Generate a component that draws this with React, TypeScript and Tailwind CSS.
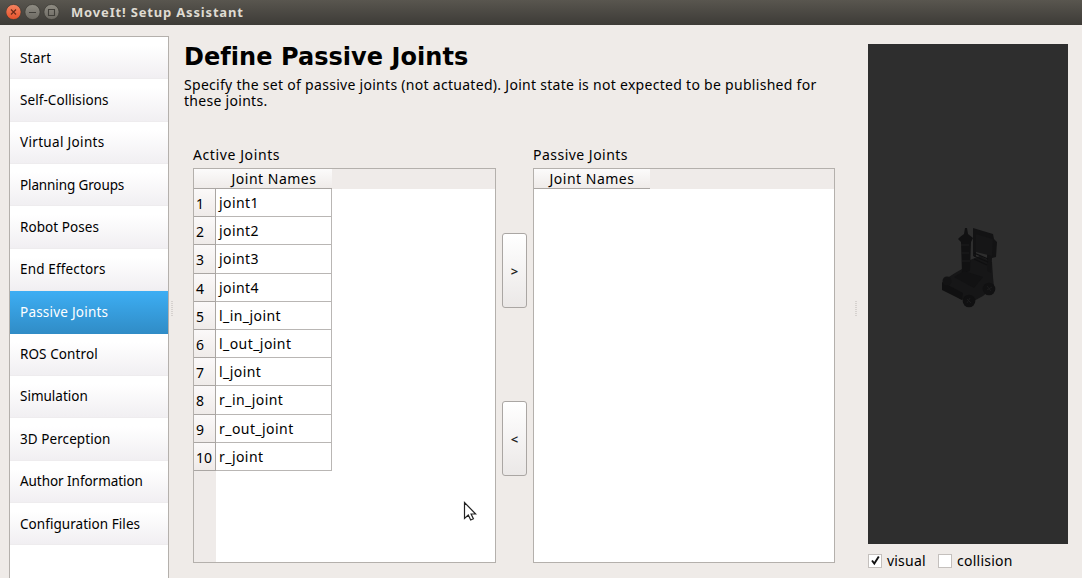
import React from "react";

const steps = [
  { label: "Start", tracking: "tracking-[0.2px]" },
  { label: "Self-Collisions", tracking: "tracking-[0.07px]" },
  { label: "Virtual Joints", tracking: "tracking-[0.33px]" },
  { label: "Planning Groups", tracking: "tracking-[-0.12px]" },
  { label: "Robot Poses", tracking: "tracking-[0.07px]" },
  { label: "End Effectors", tracking: "tracking-[0.16px]" },
  { label: "Passive Joints", tracking: "tracking-[0.22px]" },
  { label: "ROS Control", tracking: "tracking-[0.09px]" },
  { label: "Simulation", tracking: "tracking-[0px]" },
  { label: "3D Perception", tracking: "tracking-[0.07px]" },
  { label: "Author Information", tracking: "tracking-[-0.05px]" },
  { label: "Configuration Files", tracking: "tracking-[0.05px]" },
];

const joints = [
  "joint1", "joint2", "joint3", "joint4", "l_in_joint",
  "l_out_joint", "l_joint", "r_in_joint", "r_out_joint", "r_joint",
];

function TitleBar() {
  return (
    <header className="flex h-[25px] shrink-0 items-center bg-linear-to-b from-[#59564f] to-[#3d3b37] pl-[6px]">
      <svg width="56" height="18" viewBox="0 0 56 18" fill="none" className="-mt-px shrink-0">
        <defs>
          <linearGradient id="close" x1="0" y1="0" x2="0" y2="1">
            <stop offset="0" stopColor="#f58562" />
            <stop offset="1" stopColor="#e5512a" />
          </linearGradient>
          <linearGradient id="plain" x1="0" y1="0" x2="0" y2="1">
            <stop offset="0" stopColor="#908d84" />
            <stop offset="1" stopColor="#6c6962" />
          </linearGradient>
        </defs>
        <circle cx="7.5" cy="9" r="7.6" fill="url(#close)" stroke="#3b3934" strokeWidth=".7" />
        <circle cx="26.5" cy="9" r="7.6" fill="url(#plain)" stroke="#3b3934" strokeWidth=".7" />
        <circle cx="45.5" cy="9" r="7.6" fill="url(#plain)" stroke="#3b3934" strokeWidth=".7" />
        <path d="M5 6.5l5 5M10 6.5l-5 5" stroke="#6b2b19" strokeWidth="1.2" />
        <path d="M23 9.5h7M42.5 6.5h6v6h-6z" stroke="#413f3a" strokeWidth="1.1" />
      </svg>
      <h1 className="ml-[9px] text-[13px] font-bold tracking-[0.83px] whitespace-nowrap text-[#dfdbd2]">
        MoveIt! Setup Assistant
      </h1>
    </header>
  );
}

function Sidebar() {
  return (
    <nav className="mt-[11px] w-[160px] shrink-0 border border-b-0 border-[#b4b0ac] bg-white">
      {steps.map(({ label, tracking }) => (
        <div
          key={label}
          className={`flex h-[42.36px] items-center pl-[10px] text-[13.5px] whitespace-nowrap ${tracking} ${
            label === "Passive Joints"
              ? "bg-linear-to-b from-[#3daef4] to-[#308cc6] text-white"
              : "border-b border-[#eeecee] bg-linear-to-b from-white from-20% to-[#f1eff2] text-black"
          }`}
        >
          {label}
        </div>
      ))}
    </nav>
  );
}

function Grip({ className }: { className: string }) {
  return (
    <svg width="2" height="16" viewBox="0 0 2 16" className={className}>
      <path d="M1 0v16" stroke="#bdb8b5" strokeWidth="1" strokeDasharray="1 1" />
    </svg>
  );
}

function ActiveTable() {
  return (
    <div className="flex h-[395px] flex-col border border-[#b4b0ac] bg-white">
      <div className="flex h-[20px] shrink-0 bg-[#efebe9]">
        <div className="flex w-[138px] items-center justify-center border-b border-[#aaa6a3] bg-linear-to-b from-[#fcfbfb] to-[#efebe9] pl-[22px] text-[14px] tracking-[0.5px]">
          Joint Names
        </div>
      </div>
      <div className="flex flex-1">
        <div className="w-[22px] bg-[#efebe9]">
          {joints.map((joint, i) => (
            <div
              key={joint}
              className="flex h-[28.2px] items-center border-r border-b border-[#aaa6a3] bg-linear-to-b from-[#fbf9f9] to-[#efebe9] pt-[2px] pl-[2px] text-[14px]"
            >
              {i + 1}
            </div>
          ))}
        </div>
        <div className="w-[116px]">
          {joints.map((joint) => (
            <div key={joint} className="flex h-[28.2px] items-center border-r border-b border-[#b9b6b4] pl-[3px] text-[14px] tracking-[0.44px]">
              {joint}
            </div>
          ))}
        </div>
      </div>
    </div>
  );
}

function PassiveTable() {
  return (
    <div className="h-[395px] border border-[#b4b0ac] bg-white">
      <div className="flex h-[20px] bg-[#efebe9]">
        <div className="flex w-[116px] items-center justify-center border-b border-[#aaa6a3] bg-linear-to-b from-[#fcfbfb] to-[#efebe9] text-[14px] tracking-[0.5px]">
          Joint Names
        </div>
      </div>
    </div>
  );
}

function MoveButton({ children }: { children: React.ReactNode }) {
  return (
    <button className="h-[75px] w-[25px] rounded-[3px] border border-[#aaa6a3] bg-linear-to-b from-white to-[#ebe8e7] pt-[3px] text-[13px] font-semibold text-[#222]">
      {children}
    </button>
  );
}

function Robot() {
  return (
    <svg width="60" height="86" viewBox="0 0 60 86" className="block">
      <path d="M4 55L15 48L22 44L30 35L40 31L52 37L53 52L54 62L43 71L32 77L20 74L6 64z" fill="#161617" />
      <path d="M20 12L24 9L25 3L27 3L28 9L33 13L31 17L30 46L22 48L21 17L18 14z" fill="#111112" />
      <path d="M33 3L53 9L54 14L57 17L56 32L52 33L51 48L47 46L47 20L36 13L36 32L33 31z" fill="#131314" />
      <path d="M36 9L53 14L52 31L36 27z" fill="#161617" />
      <path d="M34 28L48 34M34 31L48 37M34 34L47 40" stroke="#0f0f10" strokeWidth="1.3" />
      <path d="M21 20h8M21 28h8M22 36h8" stroke="#1c1c1d" />
      <path d="M2 57L23 68L22 75L2 65z" fill="#101011" />
      <path d="M14 52L24 46L43 52L34 63z" fill="#121213" />
      <circle cx="29" cy="76" r="6.3" fill="#101011" />
      <circle cx="49" cy="64" r="6.3" fill="#111112" />
      <circle cx="7" cy="56" r="4.5" fill="#131314" />
      <path d="M27 74l4 4m-1-5l-3 5M47 61l4 5m1-4l-5 3" stroke="#1b1b1c" />
    </svg>
  );
}

function Preview() {
  return (
    <aside className="mt-[19px] ml-[11px] w-[200px] shrink-0">
      <div className="flex h-[500px] justify-center bg-[#2e2e2e] pt-[181px] pl-[4px]">
        <Robot />
      </div>
      <div className="mt-[6px] flex h-[21px] items-center text-[14px]">
        <span className="flex size-[14px] items-center justify-center border border-[#c4c0bd] bg-white">
          <svg width="11" height="11" viewBox="0 0 11 11" fill="none">
            <path d="M2 5.5l2.3 3L8.8 1.5" stroke="#111" strokeWidth="1.9" />
          </svg>
        </span>
        <span className="ml-[5px] w-[39px] tracking-[0.2px]">visual</span>
        <span className="ml-[12px] size-[14px] border border-[#c4c0bd] bg-white" />
        <span className="ml-[5px] tracking-[0.25px]">collision</span>
      </div>
    </aside>
  );
}

export default function App() {
  return (
    <div className="relative flex h-[578px] w-[1082px] flex-col overflow-hidden bg-[#efebe8] font-['Noto_Sans',sans-serif] text-black">
      <TitleBar />
      <div className="flex flex-1 pl-[9px]">
        <Sidebar />
        <Grip className="mt-[276px] ml-[2px] shrink-0" />
        <main className="ml-[11px] w-[651px] shrink-0">
          <h2 className="mt-[18px] h-[28px] font-['DejaVu_Sans',sans-serif] text-[24px] leading-[28px] font-bold tracking-[0.05px] whitespace-nowrap">
            Define Passive Joints
          </h2>
          <p className="mt-[6px] text-[14px] leading-[16px] tracking-[0.29px] whitespace-nowrap">
            Specify the set of passive joints (not actuated). Joint state is not expected to be published for
            <br />
            these joints.
          </p>
          <div className="mt-[36px] ml-[9px] flex">
            <section className="w-[303px]">
              <h3 className="h-[23px] text-[14px] leading-[20px] tracking-[0.6px]">Active Joints</h3>
              <ActiveTable />
            </section>
            <div className="mx-[6px] flex flex-col gap-[93px] pt-[88px]">
              <MoveButton>&gt;</MoveButton>
              <MoveButton>&lt;</MoveButton>
            </div>
            <section className="w-[302px]">
              <h3 className="h-[23px] text-[14px] leading-[20px] tracking-[0.48px]">Passive Joints</h3>
              <PassiveTable />
            </section>
          </div>
        </main>
        <Grip className="mt-[276px] ml-[20px] shrink-0" />
        <Preview />
      </div>
      <svg width="14" height="21" viewBox="0 0 14 21" className="absolute top-[501px] left-[463px]">
        <path d="M1.5 1.5v16l3.8-3.5 2.4 5 2.7-1.2-2.3-4.8h4.6z" fill="#fff" stroke="#222" strokeWidth="1.2" />
      </svg>
    </div>
  );
}
